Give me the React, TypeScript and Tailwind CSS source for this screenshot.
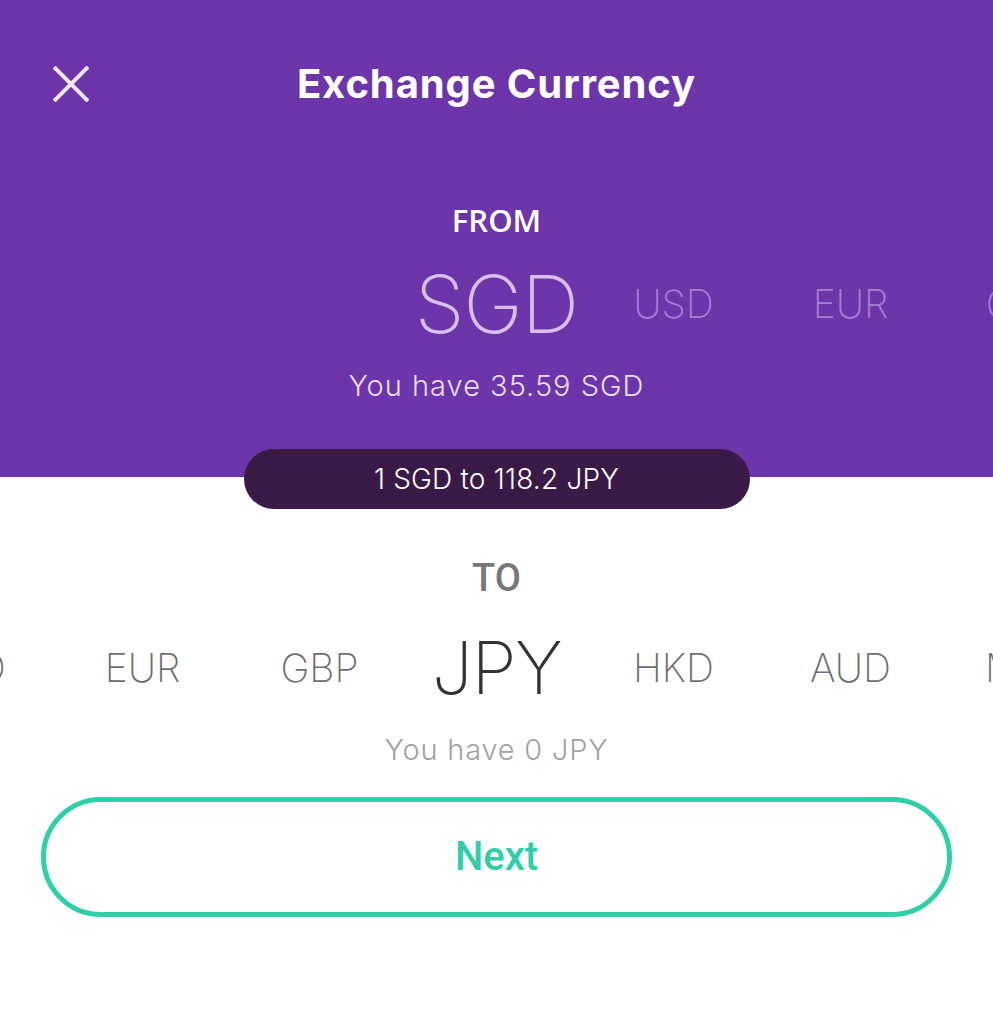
import React from "react";

const fromList = ["", "", "", "SGD", "USD", "EUR", "CNY"];
const toList = ["USD", "EUR", "GBP", "JPY", "HKD", "AUD", "MYR"];

export default function App() {
  return (
    <div className="w-[993px] h-[1024px] bg-white overflow-hidden" style={{ fontFamily: "Inter, 'Noto Sans', sans-serif" }}>
      <div className="h-[477px] bg-[#6c35a9] flex flex-col">
        <div className="mt-[54px] h-[60px] grid grid-cols-[1fr_auto_1fr] items-center">
          <div className="pl-[53px] flex items-center">
            <svg width="36" height="36" viewBox="0 0 36 36">
              <path d="M1 1 L35 35 M35 1 L1 35" stroke="#f1e7fb" strokeWidth="4" fill="none" />
            </svg>
          </div>
          <div className="text-[40px] leading-[60px] font-bold text-white tracking-[0.9px]">Exchange Currency</div>
          <div />
        </div>
        <div className="mt-[86px] h-[40px] leading-[40px] text-center text-white text-[31px] font-semibold" style={{ fontFamily: "'Open Sans', sans-serif" }}>
          FROM
        </div>
        <div className="mt-[14px] h-[100px] flex justify-center items-center overflow-hidden">
          {fromList.map((c, i) => (
            <div
              key={i}
              className={
                i === 3
                  ? "w-[177px] shrink-0 text-center text-[80px] font-extralight text-[#d8c1f1] leading-[100px] tracking-[-1px]"
                  : "w-[177px] shrink-0 text-center text-[39px] font-extralight text-[#a47fd4] leading-[100px]"
              }
            >
              {c}
            </div>
          ))}
        </div>
        <div className="mt-[12px] h-[40px] leading-[40px] text-center text-[29px] font-light text-[#eadff7] tracking-[1px]">
          You have 35.59 SGD
        </div>
      </div>
      <div className="relative -mt-[28px] mx-auto w-[506px] h-[60px] rounded-full bg-[#3a1a47] flex items-center justify-center text-[28px] font-light text-white tracking-[0.2px]">
        1 SGD to 118.2 JPY
      </div>
      <div className="mt-[47px] h-[44px] leading-[44px] text-center text-[38px] font-medium text-[#777777]" style={{ fontFamily: "Roboto, sans-serif" }}>
        TO
      </div>
      <div className="mt-[18px] h-[100px] flex justify-center items-center overflow-hidden">
        {toList.map((c, i) => (
          <div
            key={i}
            className={
              i === 3
                ? "w-[177px] shrink-0 text-center text-[73px] font-extralight text-[#333333] leading-[100px] tracking-[-1.5px]"
                : "w-[177px] shrink-0 text-center text-[39px] font-extralight text-[#6e6e6e] leading-[100px]"
            }
          >
            {c}
          </div>
        ))}
      </div>
      <div className="mt-[12px] h-[40px] leading-[40px] text-center text-[29px] font-light text-[#a3a3a3] tracking-[0.8px]">
        You have 0 JPY
      </div>
      <div className="mt-[27px] mx-[41px] h-[120px] rounded-full border-[5px] border-[#2ecfa9] flex items-center justify-center">
        <span className="text-[40px] font-medium text-[#2ecfa9]" style={{ fontFamily: "Roboto, sans-serif" }}>Next</span>
      </div>
    </div>
  );
}
